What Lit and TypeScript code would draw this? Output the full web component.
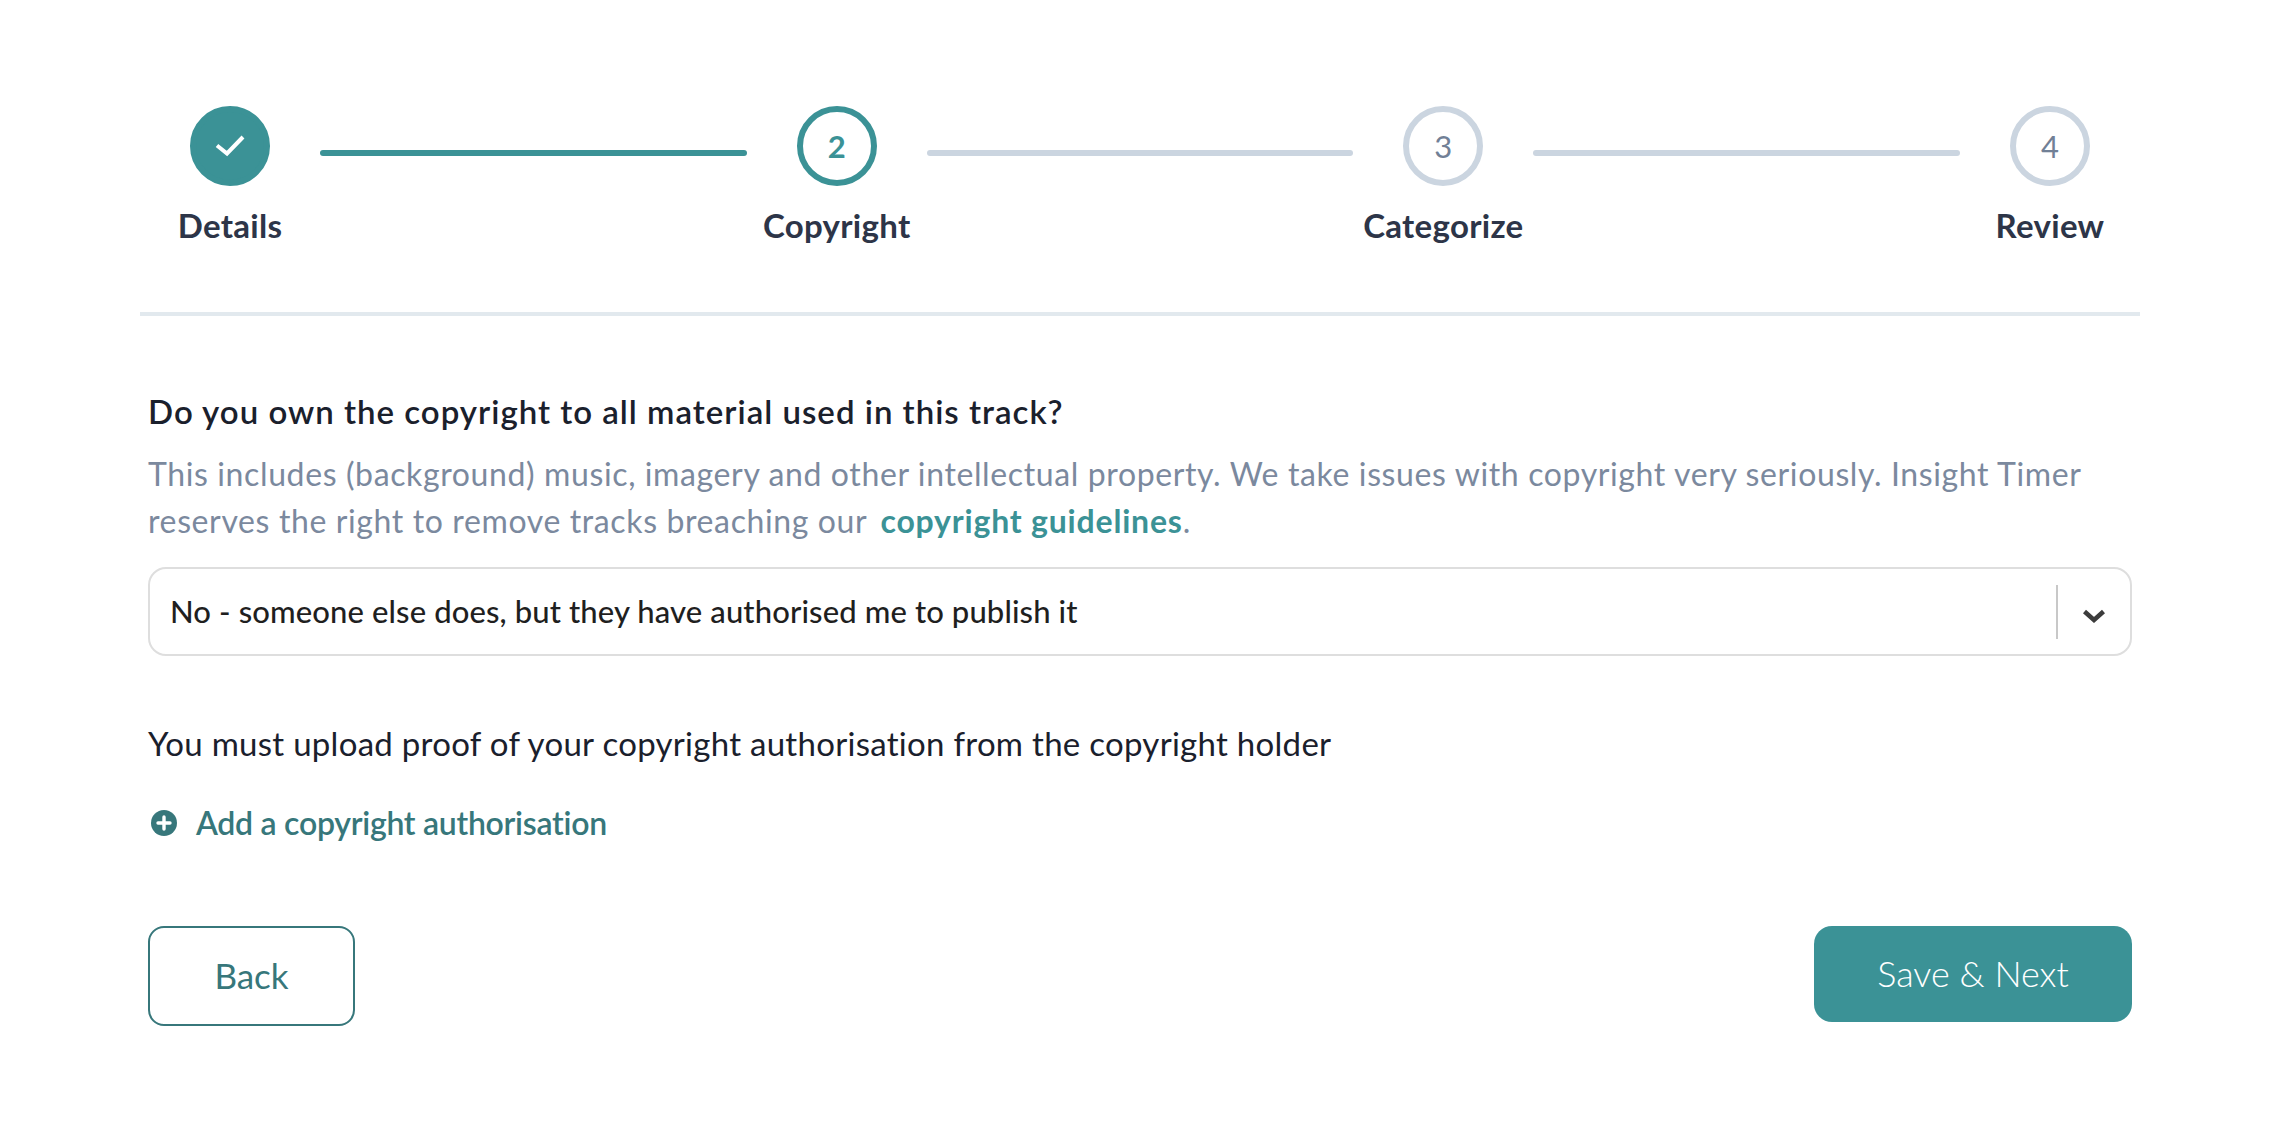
import { LitElement, html, css } from "lit";
import { customElement } from "lit/decorators.js";

@customElement("app-root")
export class AppRoot extends LitElement {
  static styles = css`
    :host { display: block; background: #fff; min-height: 1136px; font-family: "Lato", "Noto Sans", sans-serif; color: #1d2433; }
    .page { padding: 106px 146px 0 140px; display: flex; flex-direction: column; }
    .stepper { display: flex; align-items: flex-start; padding-bottom: 67px; border-bottom: 4px solid #e2e9ee; }
    .step { width: 180px; flex: none; display: flex; flex-direction: column; align-items: center; }
    .circle { width: 80px; height: 80px; box-sizing: border-box; border-radius: 50%; display: flex; align-items: center; justify-content: center; font-size: 31px; font-weight: 400; border: 6px solid #cbd5e0; color: #718096; }
    .circle.done { background: #3b9296; border-color: #3b9296; }
    .circle.active { border-color: #3b9296; color: #3b9296; font-weight: 700; }
    .label { margin-top: 19px; font-size: 33px; line-height: 40px; font-weight: 700; color: #2d3548; white-space: nowrap; letter-spacing: 0.3px; }
    .line { flex: 1; height: 6px; margin-top: 44px; border-radius: 3px; background: #cbd5e0; }
    .line.done { background: #3b9296; }
    .body { padding: 72px 0 0 8px; margin-right: 8px; display: flex; flex-direction: column; }
    h2 { margin: 0; font-size: 33px; line-height: 46px; font-weight: 600; color: #1a202c; letter-spacing: 1px; }
    .desc { margin: 16px 0 0; font-size: 32px; line-height: 47px; color: #7b899e; letter-spacing: 0.62px; }
    .desc a { margin-left: 5px; color: #3b9296; font-weight: 700; text-decoration: none; letter-spacing: 0.8px; }
    .select { margin-top: 23px; height: 89px; box-sizing: border-box; border: 2px solid #dedede; border-radius: 18px; display: flex; align-items: center; padding: 0 21px 2px 20px; font-size: 31px; font-weight: 500; color: #1f1f1f; letter-spacing: 0.12px; }
    .select span { flex: 1; }
    .divider { width: 2px; height: 54px; margin-top: 2px; background: #c8c8c8; }
    .chev { width: 24px; height: 14px; margin: 10px 3px 0 24px; display: block; }
    .note { margin: 64px 0 0; font-size: 33px; line-height: 46px; color: #1a202c; letter-spacing: 0.28px; }
    .add { margin-top: 34px; display: flex; align-items: center; gap: 19px; padding-left: 3px; font-size: 32px; line-height: 46px; font-weight: 600; color: #37777b; letter-spacing: -0.27px; }
    .add svg { width: 26px; height: 26px; display: block; }
    .actions { margin-top: 80px; display: flex; justify-content: space-between; align-items: flex-start; }
    button { font: inherit; box-sizing: border-box; padding: 0 0 2px; }
    .back { width: 207px; height: 100px; font-size: 35px; font-weight: 400; background: #fff; color: #37777b; border: 2px solid #37777b; border-radius: 16px; }
    .next { width: 318px; height: 96px; font-size: 36px; font-weight: 300; background: #3b9296; color: #fff; border: 0; border-radius: 18px; }
  `;

  private step(label: string, state: string, n: string) {
    return html`<div class="step">
      <div class="circle ${state}">
        ${state === "done"
          ? html`<svg width="30" height="22" viewBox="0 0 30 22"><path d="M2 10.5 12 18.5 28 2" fill="none" stroke="#fff" stroke-width="4"/></svg>`
          : n}
      </div>
      <div class="label">${label}</div>
    </div>`;
  }

  render() {
    return html`<div class="page">
      <div class="stepper">
        ${this.step("Details", "done", "1")}
        <div class="line done"></div>
        ${this.step("Copyright", "active", "2")}
        <div class="line"></div>
        ${this.step("Categorize", "", "3")}
        <div class="line"></div>
        ${this.step("Review", "", "4")}
      </div>
      <div class="body">
        <h2>Do you own the copyright to all material used in this track?</h2>
        <p class="desc">This includes (background) music, imagery and other intellectual property. We take issues with copyright very seriously. Insight Timer reserves the right to remove tracks breaching our <a href="#">copyright guidelines</a>.</p>
        <div class="select">
          <span>No - someone else does, but they have authorised me to publish it</span>
          <div class="divider"></div>
          <svg class="chev" viewBox="0 0 24 14"><path d="M2.5 2.5 12 11 21.5 2.5" fill="none" stroke="#3c3c3c" stroke-width="4.5"/></svg>
        </div>
        <p class="note">You must upload proof of your copyright authorisation from the copyright holder</p>
        <div class="add">
          <svg viewBox="0 0 26 26"><circle cx="13" cy="13" r="13" fill="#37777b"/><path d="M13 7v12M7 13h12" stroke="#fff" stroke-width="3.4" stroke-linecap="round"/></svg>
          Add a copyright authorisation
        </div>
        <div class="actions">
          <button class="back">Back</button>
          <button class="next">Save &amp; Next</button>
        </div>
      </div>
    </div>`;
  }
}
